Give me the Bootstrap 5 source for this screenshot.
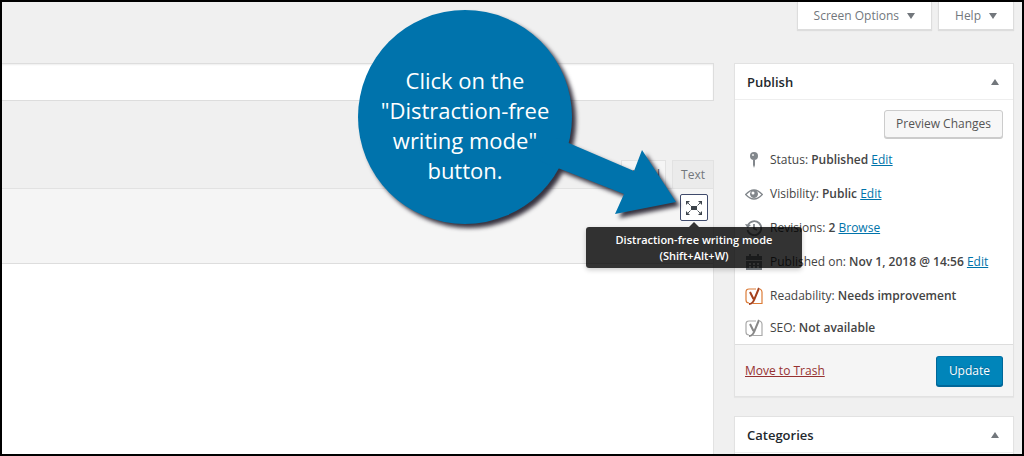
<!DOCTYPE html>
<html lang="en">
<head>
<meta charset="utf-8">
<meta name="viewport" content="width=device-width, initial-scale=1">
<title>Edit Post</title>
<link href="https://cdn.jsdelivr.net/npm/bootstrap@5.3.0/dist/css/bootstrap.min.css" rel="stylesheet">
<style>
  body { font: 12px/20px "Open Sans", "Noto Sans", sans-serif; color: #444; background: #f0f0f0; }
  .admin-frame { min-height: 100vh; max-height: 100vh; overflow: hidden; border: 2px solid #000; }
  .screen-meta { gap: 6px; padding-right: 8px; height: 61px; }
  .meta-toggle { height: 28px; padding: 0 16px; background: #fff; border: 1px solid #ddd; border-top: 0; box-shadow: 0 1px 1px rgba(0,0,0,.08); color: #72777c; font-size: 12px; }
  .caret { display: inline-block; border: 4px solid transparent; }
  .caret-down { border-top: 6px solid #72777c; border-bottom: 0; margin-left: 8px; vertical-align: 1px; }
  .caret-up { border-bottom: 6px solid #72777c; border-top: 0; }
  .edit-columns { gap: 20px; padding-right: 8px; }
  .side-column { width: 280px; }
  .title-input { height: 38px; border: 1px solid #ddd; border-left: 0; border-radius: 0; box-shadow: inset 0 1px 2px rgba(0,0,0,.07); margin-bottom: 59px; }
  .editor-tabs { gap: 6px; height: 28px; }
  .editor-tab { border: 1px solid #e2e2e2; border-bottom: 0; background: #ebebeb; color: #72777c; padding: 0 8px; min-width: 41px; height: 28px; font-size: 12px; }
  .editor-tab.current { background: #f5f5f5; color: #555; padding: 0 5px; }
  .editor-box { border: 1px solid #e2e2e2; border-left: 0; background: #fff; }
  .editor-toolbar { background: #f5f5f5; border-bottom: 1px solid #ddd; height: 75px; padding: 5px; }
  .editor-area { border: 0; height: 260px; resize: none; display: block; width: 100%; }
  .dfw-button { width: 28px; height: 27px; background: #fff; border: 1px solid #3f4a6b; border-radius: 2px; padding: 0; }
  .dfw-tip { top: 33px; left: 50%; width: 216px; margin-left: -108px; padding: 5px 0 4px; background: rgba(0,0,0,.8); color: #fff; border-radius: 3px; font-size: 11px; font-weight: 600; line-height: 16px; box-shadow: 0 2px 5px rgba(0,0,0,.2); z-index: 3; }
  .dfw-tip::before { content: ""; position: absolute; left: 103px; top: -5px; border: 5px solid transparent; border-top: 0; border-bottom-color: #333; }
  .callout { right: 15px; top: -185px; width: 336px; height: 232px; z-index: 2; pointer-events: none; }
  .callout svg { filter: drop-shadow(4px 4px 2px rgba(20,15,30,.85)); }
  .callout-text { position: absolute; left: 0; top: 0; width: 216px; height: 216px; color: #fff; font: 22px/30px "Open Sans", "Noto Sans", sans-serif; padding-top: 56px; }
  .postbox { background: #fff; border: 1px solid #e2e2e2; box-shadow: 0 1px 1px rgba(0,0,0,.04); margin-bottom: 19px; }
  .postbox-head { height: 36px; padding: 0 14px 0 12px; border-bottom: 1px solid #eee; }
  .postbox-head h2 { font-size: 13px; line-height: 20px; font-weight: 600; color: #23282d; margin: 0; }
  .preview-row { padding: 10px 10px 4px; }
  .wp-button { height: 28px; padding: 0 11px; border: 1px solid #ccc; border-radius: 3px; background: #f7f7f7; color: #555; box-shadow: 0 1px 0 #ccc; font-size: 12px; }
  .wp-button-primary { height: 30px; padding: 0 12px; background: #0085ba; border-color: #0073aa #006799 #006799; color: #fff; box-shadow: 0 1px 0 #006799; text-shadow: 0 -1px 1px #006799; }
  .status-list { padding: 1px 0; }
  .status-list li { height: 34px; padding-left: 10px; gap: 7px; }
  .status-list li.short { height: 30px; }
  .status-list svg { width: 18px; height: 18px; flex: none; }
  .status-list b { font-weight: 600; }
  .status-list a { color: #0073aa; }
  .trash-link { color: #963131; }
  .trash-link:hover { color: #dc3232; }
  .publish-actions { background: #f5f5f5; border-top: 1px solid #ddd; padding: 10px; height: 52px; }
</style>
</head>
<body>
<div class="admin-frame">
  <div class="screen-meta d-flex justify-content-end align-items-start">
    <button class="meta-toggle" type="button">Screen Options<span class="caret caret-down"></span></button>
    <button class="meta-toggle" type="button">Help<span class="caret caret-down"></span></button>
  </div>
  <div class="edit-columns d-flex align-items-start">
    <main class="flex-grow-1">
      <input class="title-input d-block w-100" type="text" aria-label="Post title">
      <div class="editor-tabs d-flex justify-content-end">
        <button class="editor-tab current" type="button">Visual</button>
        <button class="editor-tab" type="button">Text</button>
      </div>
      <div class="editor-box">
        <div class="editor-toolbar d-flex justify-content-end">
          <div class="position-relative">
            <button class="dfw-button d-flex align-items-center justify-content-center" type="button" aria-label="Distraction-free writing mode" aria-describedby="dfw-tip">
              <svg width="18" height="18" viewBox="0 0 18 18"><path fill="#3c434a" d="M6 7h6v4H6zM1 2h4L1 6zM17 2h-4l4 4zM1 16h4l-4-4zM17 16h-4l4-4z"/><path d="M2 3l3.500 3.500M16 3l-3.500 3.500M2 15l3.500-3.500M16 15l-3.500-3.500" stroke="#50575e" stroke-width="1"/></svg>
            </button>
            <div class="dfw-tip position-absolute text-center" id="dfw-tip" role="tooltip">Distraction-free writing mode<br>(Shift+Alt+W)</div>
            <div class="callout position-absolute">
              <svg width="336" height="232" viewBox="0 0 336 232"><g fill="#0073ac"><circle cx="108" cy="108" r="107"/><path d="M200 129l77 33 8-21 34 52-61 12 9-20-84-33z"/></g></svg>
              <div class="callout-text text-center">Click on the<br>"Distraction-free<br>writing mode"<br>button.</div>
            </div>
          </div>
        </div>
        <textarea class="editor-area" aria-label="Post content"></textarea>
      </div>
    </main>
    <aside class="side-column flex-shrink-0">
      <section class="postbox">
        <div class="postbox-head d-flex align-items-center justify-content-between"><h2>Publish</h2><span class="caret caret-up"></span></div>
        <div class="preview-row d-flex justify-content-end"><button class="wp-button" type="button">Preview Changes</button></div>
        <ul class="status-list list-unstyled mb-0">
          <li class="d-flex align-items-center"><svg viewBox="0 0 18 18"><circle cx="9" cy="5" r="4" fill="#82878c"/><path d="M8 9h2v5l-1 3-1-3z" fill="#82878c"/><circle cx="8" cy="4" r="1" fill="#eee"/></svg><span>Status: <b>Published</b> <a href="#">Edit</a></span></li>
          <li class="d-flex align-items-center"><svg viewBox="0 0 18 18" fill="none" stroke="#82878c"><path stroke-width="1.300" d="M.7 9.500Q9 .5 17.300 9.500 9 18.500 .7 9.500z"/><circle cx="9" cy="9" r="3.500" fill="#82878c"/><circle cx="8" cy="8" r="1.500" fill="#fff" stroke="none"/></svg><span>Visibility: <b>Public</b> <a href="#">Edit</a></span></li>
          <li class="d-flex align-items-center"><svg viewBox="0 0 18 18" fill="none" stroke="#82878c" stroke-width="1.800"><path d="M3 6a7 7 0 1 1-.5 5M9 5v4.500l3 1.500"/><path d="M0 5l2.500 4L6 6z" fill="#82878c" stroke="none"/></svg><span>Revisions: <b>2</b> <a href="#">Browse</a></span></li>
          <li class="d-flex align-items-center"><svg viewBox="0 0 18 18" fill="#82878c"><path d="M1 3h3V1h2v2h6V1h2v2h3v4H1zM1 8h16v9H1z"/><path d="M4 10h2v2H4zm4 0h2v2H8zm4 0h2v2h-2zM4 13h2v2H4zm4 0h2v2H8zm4 0h2v2h-2z" fill="#fff"/></svg><span>Published on: <b>Nov 1, 2018 @ 14:56</b> <a href="#">Edit</a></span></li>
          <li class="d-flex align-items-center"><svg viewBox="0 0 18 18" fill="none"><path d="M11 2H4Q1 2 1 5v8q0 3 3 3M8 16.500h9V5q0-2-2-3" stroke="#dc7c38" stroke-width="1.200"/><path d="M5 5l3.500 7M14 1L9 13q-1.500 4-5 4" stroke="#a4401c" stroke-width="2"/></svg><span>Readability: <b>Needs improvement</b></span></li>
          <li class="short d-flex align-items-center"><svg viewBox="0 0 18 18" fill="none"><path d="M11 2H4Q1 2 1 5v8q0 3 3 3M8 16.500h9V5q0-2-2-3" stroke="#aaa" stroke-width="1.200"/><path d="M5 5l3.500 7M14 1L9 13q-1.500 4-5 4" stroke="#888" stroke-width="2"/></svg><span>SEO: <b>Not available</b></span></li>
        </ul>
        <div class="publish-actions d-flex align-items-center justify-content-between"><a class="trash-link" href="#">Move to Trash</a><button class="wp-button wp-button-primary" type="button">Update</button></div>
      </section>
      <section class="postbox">
        <div class="postbox-head d-flex align-items-center justify-content-between"><h2>Categories</h2><span class="caret caret-up"></span></div>
        <div class="p-3">&nbsp;</div>
      </section>
    </aside>
  </div>
</div>
<script src="https://cdn.jsdelivr.net/npm/bootstrap@5.3.0/dist/js/bootstrap.bundle.min.js"></script>
</body>
</html>
